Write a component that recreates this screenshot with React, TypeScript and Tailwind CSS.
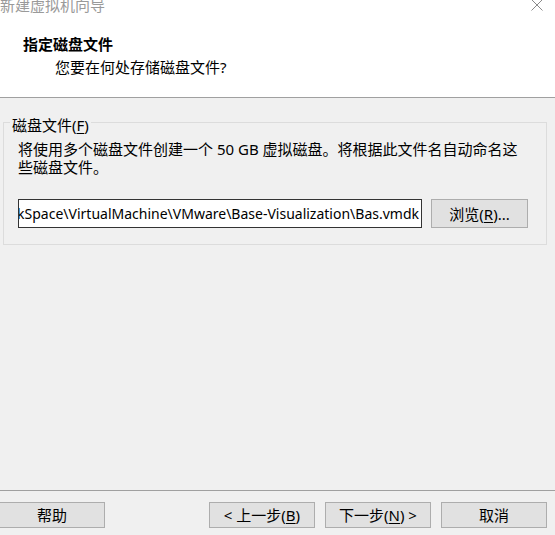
export default function App() {
  const font = 'font-["Noto_Sans","Noto_Sans_CJK_SC",sans-serif]'
  return (
    <div className={`${font} w-[555px] h-[535px] bg-[#f0f0f0] flex flex-col overflow-hidden text-black`}>
      {/* header */}
      <div className="relative h-[98px] bg-white border-b border-[#a0a0a0] flex flex-col">
        <div className="-mt-[5px] leading-[20px] text-[15px] text-[#9a9a9a] whitespace-nowrap">新建虚拟机向导</div>
        <svg className="absolute top-0 right-[12px]" width="12" height="11" viewBox="0 0 12 11">
          <path d="M0.5 -0.5 L11.5 10.5 M11.5 -0.5 L0.5 10.5" stroke="#8a8a8a" strokeWidth="1" fill="none" />
        </svg>
        <div className="mt-[19px] pl-[23px] leading-[20px] text-[15px] font-bold">指定磁盘文件</div>
        <div className="mt-[3px] pl-[55px] leading-[20px] text-[15px]">您要在何处存储磁盘文件?</div>
      </div>

      {/* body */}
      <div className="flex-1">
        <fieldset className="mt-[11px] ml-[3px] mr-[8px] border border-[#dcdcdc] pb-[16px]">
          <legend className="ml-[6px] px-[2px] pt-[6px] leading-[20px] text-[15px]">
            磁盘文件(<span className="underline underline-offset-2">F</span>)
          </legend>
          <div className="mt-[5px] ml-[14px] text-[15px] leading-[18px] whitespace-nowrap">
            <div>将使用多个磁盘文件创建一个 50 GB 虚拟磁盘。将根据此文件名自动命名这</div>
            <div>些磁盘文件。</div>
          </div>
          <div className="mt-[23px] ml-[14px] flex items-center gap-[9px]">
            <div className="w-[404px] h-[29px] bg-white border border-[#333] flex items-center justify-end overflow-hidden pr-[2px]">
              <span className="whitespace-nowrap text-[14px] leading-[20px]">
                D:\WorkSpace\VirtualMachine\VMware\Base-Visualization\Bas.vmdk
              </span>
            </div>
            <button className="w-[97px] h-[29px] bg-[#e1e1e1] border border-[#adadad] text-[15px] leading-[20px]">
              浏览(<span className="underline underline-offset-2">R</span>)...
            </button>
          </div>
        </fieldset>
      </div>

      {/* footer */}
      <div className="h-[45px] border-t border-[#a0a0a0] pt-[11px] flex">
        <button className="-ml-[1px] w-[106px] h-[26px] bg-[#e1e1e1] border border-[#adadad] text-[15px] leading-[20px]">
          帮助
        </button>
        <div className="ml-auto mr-[8px] flex gap-[10px]">
          <button className="w-[106px] h-[26px] bg-[#e1e1e1] border border-[#adadad] text-[15px] leading-[20px]">
            &lt; 上一步(<span className="underline underline-offset-2">B</span>)
          </button>
          <button className="w-[106px] h-[26px] bg-[#e1e1e1] border border-[#adadad] text-[15px] leading-[20px]">
            下一步(<span className="underline underline-offset-2">N</span>) &gt;
          </button>
          <button className="w-[106px] h-[26px] bg-[#e1e1e1] border border-[#adadad] text-[15px] leading-[20px]">
            取消
          </button>
        </div>
      </div>
    </div>
  )
}
